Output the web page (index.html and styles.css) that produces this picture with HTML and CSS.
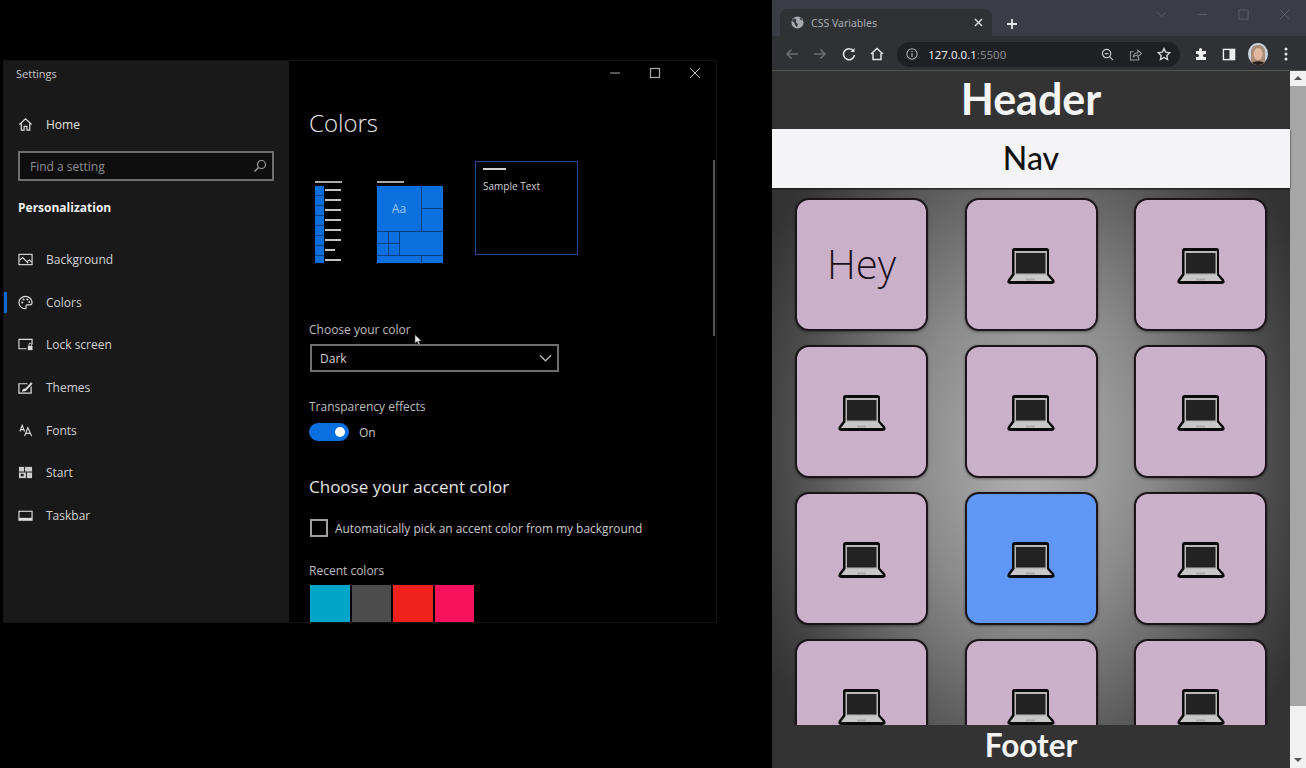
FILE: index.html
```html
<!DOCTYPE html>
<html lang="en">
<head>
  <meta charset="UTF-8" />
  <title>Settings and CSS Variables</title>
  <link rel="stylesheet" href="styles.css">
</head>
<body>
  <svg class="defs" width="0" height="0">
    <symbol id="laptop" viewBox="0 0 48 36">
      <path d="M5 2.500Q5 0 7.500 0H39.500Q42 0 42 2.500V26L47 31.500Q49 36 44.500 36H3.500Q-1 36 1 31.500L5 26Z" fill="#0a0a0a"/>
      <rect x="7.500" y="3" width="32.500" height="24" fill="#b8b8b8"/>
      <rect x="9" y="5" width="29.500" height="20.500" fill="#222"/>
      <path d="M7.500 27H40L45 33H3Z" fill="#c8c8c8"/>
      <rect x="19" y="30.500" width="9" height="2" fill="#aaa"/>
    </symbol>
  </svg>

  <!-- settings window -->
  <section class="settings">
    <aside class="side">
      <div class="side-title">Settings</div>
      <div class="nav-item home">
        <svg viewBox="0 0 16 16" class="ic"><path d="M1.500 8L8 2l6.500 6M3.500 6.500V14H6.500V10H9.500V14H12.500V6.500" fill="none" stroke="#ddd" stroke-width="1.300"/></svg>
        <span>Home</span>
      </div>
      <div class="search">
        <span>Find a setting</span>
        <svg viewBox="0 0 14 14" width="14" height="14"><circle cx="8.500" cy="5.500" r="4" fill="none" stroke="#999" stroke-width="1.200"/><path d="M5.500 8.500L1.500 12.500" stroke="#999" stroke-width="1.400"/></svg>
      </div>
      <div class="side-head">Personalization</div>
      <ul class="nav-list">
        <li class="nav-item">
          <svg viewBox="0 0 16 14" class="ic"><rect x="1" y="1.500" width="14" height="11" fill="none" stroke="#ddd" stroke-width="1.200"/><path d="M1.500 8L5 5l6 6M10 9l2-1.500 3 2.500" fill="none" stroke="#ddd" stroke-width="1.200"/></svg>
          <span>Background</span>
        </li>
        <li class="nav-item active">
          <svg viewBox="0 0 16 16" class="ic"><path d="M8 1.500C4 1.500 1 4.500 1 8s3 6.500 6.500 6.500c1.500 0 1.500-1 1-2-.5-1.200.3-2 1.500-2h2.500c1.500 0 2.500-1 2.500-2.500 0-3.500-3-6.500-7-6.500Z" fill="none" stroke="#ddd" stroke-width="1.200"/><circle cx="4.500" cy="8" r="1.100" fill="#ddd"/><circle cx="6" cy="4.800" r="1.100" fill="#ddd"/><circle cx="10" cy="4.800" r="1.100" fill="#ddd"/><circle cx="12" cy="7.500" r="1" fill="#ddd"/></svg>
          <span>Colors</span>
        </li>
        <li class="nav-item">
          <svg viewBox="0 0 16 14" class="ic"><path d="M9 11.500H1V1.500H15V7" fill="none" stroke="#ddd" stroke-width="1.200"/><rect x="10.500" y="8.500" width="5" height="4.500" fill="#ddd"/><path d="M11.700 8.500V7a1.300 1.300 0 0 1 2.600 0V8.500" fill="none" stroke="#ddd"/></svg>
          <span>Lock screen</span>
        </li>
        <li class="nav-item">
          <svg viewBox="0 0 16 14" class="ic"><path d="M10 3H1V13H14V6" fill="none" stroke="#ddd" stroke-width="1.300"/><path d="M4 11C5 8 7 8 8 8L14 1.500 15.500 3 9.500 9.500C9 11 6 11.500 4 11Z" fill="#ddd"/></svg>
          <span>Themes</span>
        </li>
        <li class="nav-item">
          <svg viewBox="0 0 16 14" class="ic"><path d="M2 8L4.500 1.500 7 8M3 6H6M7 13L10.500 4 14.500 13M8.500 10H13" fill="none" stroke="#ddd" stroke-width="1.200"/></svg>
          <span>Fonts</span>
        </li>
        <li class="nav-item">
          <svg viewBox="0 0 16 14" class="ic"><rect x="1" y="1" width="14" height="12" fill="#ccc"/><path d="M1 6.500H15M7 1V6.500M9 6.500V13" stroke="#191919" stroke-width="1"/><rect x="3" y="8.500" width="3" height="2.500" fill="#191919"/></svg>
          <span>Start</span>
        </li>
        <li class="nav-item">
          <svg viewBox="0 0 16 14" class="ic"><rect x="1" y="2.500" width="14" height="9.500" fill="none" stroke="#ddd" stroke-width="1.200"/><rect x="1" y="9.500" width="14" height="2.500" fill="#ddd"/></svg>
          <span>Taskbar</span>
        </li>
      </ul>
    </aside>

    <div class="pane">
      <div class="win-btns">
        <svg viewBox="0 0 12 12" width="12" height="12"><path d="M1 6H11" stroke="#aaa" stroke-width="1"/></svg>
        <svg viewBox="0 0 12 12" width="12" height="12"><rect x="1.500" y="1.500" width="9" height="9" fill="none" stroke="#aaa" stroke-width="1.200"/></svg>
        <svg viewBox="0 0 12 12" width="12" height="12"><path d="M1 1L11 11M11 1L1 11" stroke="#bbb" stroke-width="1"/></svg>
      </div>
      <h1 class="pane-title">Colors</h1>

      <div class="previews">
        <div class="prev-list">
          <div class="prev-bar"></div>
          <div class="list-body">
            <div class="list-col"></div>
            <div class="list-lines">
              <i></i><i></i><i></i><i></i><i></i><i></i><i class="short"></i><i></i>
            </div>
          </div>
        </div>
        <div class="prev-tiles">
          <div class="prev-bar"></div>
          <div class="tiles">
            <div class="t-aa">Aa</div>
            <div class="t-r"></div>
            <div class="t-r"></div>
            <div></div><div></div>
            <div class="t-big"></div>
            <div></div><div></div>
            <div class="t-bot"></div>
            <div></div>
          </div>
        </div>
        <div class="prev-text">
          <div class="prev-line"></div>
          <div>Sample Text</div>
        </div>
      </div>

      <div class="label color-label">Choose your color</div>
      <div class="select">
        <span>Dark</span>
        <svg viewBox="0 0 14 8" width="13" height="8"><path d="M1 1L7 7 13 1" fill="none" stroke="#bbb" stroke-width="1.300"/></svg>
      </div>

      <div class="label trans-label">Transparency effects</div>
      <div class="toggle-row">
        <div class="toggle"><div class="knob"></div></div>
        <span>On</span>
      </div>

      <h2 class="accent">Choose your accent color</h2>
      <div class="check-row">
        <div class="check"></div>
        <span>Automatically pick an accent color from my background</span>
      </div>
      <div class="label recent-label">Recent colors</div>
      <div class="swatches">
        <div class="sw sw-cyan"></div>
        <div class="sw sw-grey"></div>
        <div class="sw sw-red"></div>
        <div class="sw sw-pink"></div>
      </div>

      <div class="pane-scroll"></div>
      <svg class="cursor" viewBox="0 0 10 14" width="9" height="14"><path d="M1 1V11L3.500 8.800 5.500 13 7 12.300 5.200 8.200H8.500Z" fill="#eee" stroke="#111" stroke-width=".6"/></svg>
    </div>
  </section>

  <!-- browser window -->
  <section class="browser">
    <div class="tabstrip">
      <div class="tab">
        <svg viewBox="0 0 14 14" width="13" height="13"><circle cx="7" cy="7" r="6.500" fill="#a9abb0"/><path d="M3 2.500L6 4 5 6.500 7.500 8.500 6.500 12 4.500 10 3.500 7 1 5.500ZM9 1.500L10 4 12.500 5 11.500 3Z" fill="#34363b"/></svg>
        <span class="tab-name">CSS Variables</span>
        <svg viewBox="0 0 10 10" width="9" height="9" class="tab-x"><path d="M1 1L9 9M9 1L1 9" stroke="#ddd" stroke-width="1.600"/></svg>
      </div>
      <svg viewBox="0 0 12 12" width="12" height="12" class="newtab"><path d="M6 1V11M1 6H11" stroke="#e4e4e4" stroke-width="1.800"/></svg>
      <div class="frame-btns">
        <svg viewBox="0 0 12 8" width="11" height="7"><path d="M1 1L6 6.500 11 1" fill="none" stroke="#5d6068" stroke-width="1.100"/></svg>
        <svg viewBox="0 0 12 12" width="11" height="11"><path d="M1 6H11" stroke="#5d6068" stroke-width="1"/></svg>
        <svg viewBox="0 0 12 12" width="11" height="11"><rect x="1" y="1" width="10" height="10" fill="none" stroke="#5d6068" stroke-width="1"/></svg>
        <svg viewBox="0 0 12 12" width="11" height="11"><path d="M1 1L11 11M11 1L1 11" stroke="#5d6068" stroke-width="1"/></svg>
      </div>
    </div>
    <div class="toolbar">
      <svg viewBox="0 0 14 12" width="14" height="12"><path d="M13 6H2M6.500 1.500L2 6l4.500 4.500" fill="none" stroke="#6c6e73" stroke-width="1.500"/></svg>
      <svg viewBox="0 0 14 12" width="14" height="12"><path d="M1 6H12M7.500 1.500L12 6l-4.500 4.500" fill="none" stroke="#6c6e73" stroke-width="1.500"/></svg>
      <svg viewBox="0 0 14 14" width="14" height="14"><path d="M11.500 4A5.500 5.500 0 1 0 12.500 8" fill="none" stroke="#e2e2e2" stroke-width="1.600"/><path d="M12.500 1V5H8.500Z" fill="#e2e2e2"/></svg>
      <svg viewBox="0 0 14 14" width="14" height="14"><path d="M1 7L7 1.500 13 7M3 6V12.500H11V6" fill="none" stroke="#e2e2e2" stroke-width="1.500"/></svg>
      <div class="urlbar">
        <svg viewBox="0 0 14 14" width="12" height="12"><circle cx="7" cy="7" r="6" fill="none" stroke="#b5b5b5" stroke-width="1.200"/><path d="M7 6V10.500M7 3.500V5" stroke="#b5b5b5" stroke-width="1.300"/></svg>
        <span class="url"><b>127.0.0.1</b>:5500</span>
        <div class="url-icons">
          <svg viewBox="0 0 14 14" width="13" height="13"><circle cx="6" cy="6" r="4.500" fill="none" stroke="#c8c8c8" stroke-width="1.300"/><path d="M9.500 9.500L13 13M4 6H8" stroke="#c8c8c8" stroke-width="1.300"/></svg>
          <svg viewBox="0 0 14 14" width="13" height="13"><path d="M5 4H1.500V13H10.500V10" fill="none" stroke="#999" stroke-width="1.100"/><path d="M4.500 10C5 6.500 7 5 9.500 5V2.500L13.500 6 9.500 9.500V7.500C7.500 7.500 6 8 4.500 10Z" fill="none" stroke="#999" stroke-width="1.100"/></svg>
          <svg viewBox="0 0 14 14" width="14" height="14"><path d="M7 1.500L8.700 5.200 12.800 5.700 9.800 8.400 10.600 12.500 7 10.500 3.400 12.500 4.200 8.400 1.200 5.700 5.300 5.200Z" fill="none" stroke="#ddd" stroke-width="1.300"/></svg>
        </div>
      </div>
      <div class="tool-right">
        <svg viewBox="0 0 14 14" width="14" height="14"><path d="M5 2.500a1.500 1.500 0 0 1 3 0V4h4v3H10.500a1.500 1.500 0 0 0 0 3H12v3H2V10H3.500a1.500 1.500 0 0 0 0-3H2V4H5Z" fill="#eee"/></svg>
        <svg viewBox="0 0 14 14" width="14" height="13"><rect x="1" y="1.500" width="12" height="11" fill="none" stroke="#eee" stroke-width="1.500"/><rect x="7.500" y="1.500" width="5.500" height="11" fill="#eee"/></svg>
        <svg viewBox="0 0 20 22" width="20" height="22" class="avatar"><defs><clipPath id="av"><ellipse cx="10" cy="11" rx="10" ry="11"/></clipPath></defs><g clip-path="url(#av)"><rect width="20" height="22" fill="#c8d4e0"/><path d="M3 22V9C3 3 7 2 10 2s7 1 7 7V22Z" fill="#a98c78"/><ellipse cx="10" cy="11" rx="4.500" ry="6" fill="#e2b8a0"/><path d="M2 22C4 17 16 17 18 22Z" fill="#2b1f1c"/></g></svg>
        <svg viewBox="0 0 4 14" width="4" height="14" class="dots"><circle cx="2" cy="2" r="1.500" fill="#e8e8e8"/><circle cx="2" cy="7" r="1.500" fill="#e8e8e8"/><circle cx="2" cy="12" r="1.500" fill="#e8e8e8"/></svg>
      </div>
    </div>

    <div class="viewport">
      <div class="page">
        <header class="page-head">Header</header>
        <nav class="page-nav">Nav</nav>
        <main class="page-main">
          <div class="card hey">Hey</div>
          <div class="card"><svg class="laptop"><use href="#laptop"/></svg></div>
          <div class="card"><svg class="laptop"><use href="#laptop"/></svg></div>
          <div class="card"><svg class="laptop"><use href="#laptop"/></svg></div>
          <div class="card"><svg class="laptop"><use href="#laptop"/></svg></div>
          <div class="card"><svg class="laptop"><use href="#laptop"/></svg></div>
          <div class="card"><svg class="laptop"><use href="#laptop"/></svg></div>
          <div class="card blue"><svg class="laptop"><use href="#laptop"/></svg></div>
          <div class="card"><svg class="laptop"><use href="#laptop"/></svg></div>
          <div class="card"><svg class="laptop"><use href="#laptop"/></svg></div>
          <div class="card"><svg class="laptop"><use href="#laptop"/></svg></div>
          <div class="card"><svg class="laptop"><use href="#laptop"/></svg></div>
        </main>
        <footer class="page-foot">Footer</footer>
      </div>
      <div class="scrollbar">
        <div class="arrow arrow-up"></div>
        <div class="thumb"></div>
        <div class="arrow arrow-down"></div>
      </div>
    </div>
  </section>
</body>
</html>
```

FILE: styles.css
```css
* {
  box-sizing: border-box;
}
html, body {
  margin: 0;
  height: 100%;
  overflow: hidden;
}
body {
  position: relative;
  background-color: #000;
  font-family: "Open Sans", "Noto Sans", sans-serif;
  color: #ddd;
}
.defs {
  position: absolute;
}

/* settings window */
.settings {
  position: absolute;
  left: 3px;
  top: 60px;
  width: 714px;
  height: 563px;
  display: flex;
  border: 1px solid #141414;
  overflow: hidden;
}
.side {
  width: 285px;
  flex-shrink: 0;
  background-color: #191919;
  padding: 6px 14px 0;
}
.side-title {
  font-size: 11px;
  line-height: 14px;
  color: #c8c8c8;
  margin: 0 0 32px -2px;
}
.nav-item {
  display: flex;
  align-items: center;
  gap: 13px;
  height: 42.700px;
  font-size: 12px;
  color: #d2d2d2;
  position: relative;
}
.nav-item.home {
  height: 22px;
  margin-bottom: 16px;
  color: #e4e4e4;
}
.ic {
  width: 15px;
  height: 15px;
  flex-shrink: 0;
}
.nav-item.active::before {
  content: "";
  position: absolute;
  left: -14px;
  top: 11px;
  width: 3px;
  height: 21px;
  background-color: #0a6cd6;
}
.search {
  height: 30px;
  width: 256px;
  border: 2px solid #6f6f6f;
  background-color: #0e0e0e;
  display: flex;
  align-items: center;
  justify-content: space-between;
  padding: 0 5px 0 10px;
  font-size: 12px;
  color: #8c8c8c;
}
.side-head {
  margin-top: 19px;
  font-size: 12px;
  font-weight: 700;
  color: #f0f0f0;
  line-height: 16px;
}
.nav-list {
  list-style: none;
  margin: 22px 0 0;
  padding: 0;
}

/* right pane */
.pane {
  flex: 1;
  position: relative;
  background-color: #000;
  padding: 0 20px;
}
.win-btns {
  position: absolute;
  right: 15px;
  top: 6px;
  display: flex;
  gap: 28px;
}
.pane-title {
  margin: 45px 0 0;
  font-size: 24px;
  font-weight: 300;
  line-height: 34px;
  color: #e8e8e8;
}
.previews {
  display: flex;
  align-items: flex-start;
  margin: 21px 0 0 6px;
  height: 131px;
}
.prev-list {
  width: 26px;
  margin-top: 20px;
}
.prev-bar {
  height: 2px;
  width: 27px;
  background-color: #aaa;
}
.list-body {
  display: flex;
  gap: 1px;
  margin-top: 3px;
}
.list-col {
  width: 9px;
  height: 77px;
  background: repeating-linear-gradient(#0a6fdc 0 9px, #063f80 9px 10px);
}
.list-lines {
  display: flex;
  flex-direction: column;
  gap: 8px;
  padding-top: 3px;
}
.list-lines i {
  display: block;
  width: 16px;
  height: 2px;
  background-color: #c4c4c4;
}
.list-lines i.short {
  width: 10px;
}
.prev-tiles {
  margin: 20px 0 0 36px;
}
.tiles {
  margin-top: 3px;
  width: 66px;
  display: grid;
  grid-template-columns: 11px 10px 21px 21px;
  grid-template-rows: 22px 22px 11px 11px 7px;
  gap: 1px;
  background-color: #063f80;
}
.tiles div {
  background-color: #0a70de;
}
.tiles .t-aa {
  grid-column: 1 / 4;
  grid-row: 1 / 3;
  display: flex;
  align-items: center;
  justify-content: center;
  font-size: 12px;
  color: #9ec7f2;
}
.tiles .t-r {
  grid-column: 4;
}
.tiles .t-big {
  grid-column: 3 / 5;
  grid-row: 3 / 5;
}
.tiles .t-bot {
  grid-column: 1 / 4;
}
.prev-text {
  width: 103px;
  height: 94px;
  margin-left: 32px;
  border: 1px solid #234a90;
  padding: 6px 7px;
  font-size: 10px;
  line-height: 14px;
  color: #cfcfcf;
}
.prev-line {
  width: 23px;
  height: 2px;
  background-color: #d0d0d0;
  margin-bottom: 9px;
}
.label {
  font-size: 12px;
  line-height: 16px;
  color: #bdbdbd;
}
.color-label {
  margin-top: 30px;
}
.select {
  width: 249px;
  height: 28px;
  margin: 6px 0 0 1px;
  border: 2px solid #6f6f6f;
  display: flex;
  align-items: center;
  justify-content: space-between;
  padding: 0 5px 0 8px;
  font-size: 12px;
  color: #d0d0d0;
}
.trans-label {
  margin-top: 27px;
}
.toggle-row {
  display: flex;
  align-items: center;
  gap: 10px;
  margin-top: 8px;
  font-size: 12px;
  color: #c8c8c8;
}
.toggle {
  width: 40px;
  height: 18px;
  border-radius: 9px;
  background-color: #0a6fe0;
  position: relative;
}
.knob {
  position: absolute;
  right: 4px;
  top: 4px;
  width: 10px;
  height: 10px;
  border-radius: 50%;
  background-color: #fff;
}
.accent {
  margin: 34px 0 0;
  font-size: 17px;
  font-weight: 400;
  line-height: 24px;
  color: #e4e4e4;
}
.check-row {
  display: flex;
  align-items: center;
  gap: 7px;
  margin: 20px 0 0 1px;
  font-size: 11.900px;
  color: #c8c8c8;
}
.check {
  width: 18px;
  height: 18px;
  border: 2px solid #a0a0a0;
}
.recent-label {
  margin-top: 26px;
}
.swatches {
  display: flex;
  gap: 2px;
  margin: 6px 0 0 1px;
}
.sw {
  width: 39.500px;
  height: 37px;
}
.sw-cyan { background-color: #00a6c8; }
.sw-grey { background-color: #4c4c4c; }
.sw-red { background-color: #f0201c; }
.sw-pink { background-color: #f8125e; }
.pane-scroll {
  position: absolute;
  right: 1px;
  top: 99px;
  width: 2px;
  height: 176px;
  background-color: #555;
}
.cursor {
  position: absolute;
  left: 125px;
  top: 272px;
}

/* browser window */
.browser {
  position: absolute;
  left: 772px;
  top: 0;
  width: 534px;
  height: 768px;
  display: flex;
  flex-direction: column;
  font-family: "Noto Sans", "Open Sans", sans-serif;
}
.tabstrip {
  height: 36px;
  flex-shrink: 0;
  background-color: #3a3d46;
  display: flex;
  align-items: flex-end;
  padding-left: 8px;
  position: relative;
}
.tab {
  width: 212px;
  height: 27px;
  background-color: #2f3135;
  border-radius: 8px 8px 0 0;
  display: flex;
  align-items: center;
  padding: 0 9px 0 11px;
  gap: 7px;
}
.tab-name {
  flex: 1;
  font-size: 10.500px;
  color: #a9abb0;
}
.newtab {
  margin: 0 0 6px 14px;
}
.frame-btns {
  position: absolute;
  right: 16px;
  top: 9px;
  display: flex;
  align-items: center;
  gap: 30px;
}
.toolbar {
  height: 35px;
  flex-shrink: 0;
  background-color: #2f3135;
  border-bottom: 1px solid #55574f;
  display: flex;
  align-items: center;
  padding: 2px 18px 0 13px;
  gap: 14.300px;
}
.urlbar {
  width: 283px;
  height: 25px;
  margin-left: -1px;
  border-radius: 13px;
  background-color: #1f2023;
  display: flex;
  align-items: center;
  padding: 0 9px;
  gap: 10px;
}
.url {
  flex: 1;
  font-size: 11.500px;
  color: #85878b;
}
.url b {
  font-weight: 400;
  color: #e8e8e8;
}
.url-icons {
  display: flex;
  align-items: center;
  gap: 15px;
}
.tool-right {
  flex: 1;
  display: flex;
  align-items: center;
  gap: 14px;
}
.avatar {
  margin-left: -2px;
}
.dots {
  margin-left: 2px;
}
.viewport {
  flex: 1;
  display: flex;
  min-height: 0;
}
.page {
  width: 518px;
  display: flex;
  flex-direction: column;
  font-family: Lato, "Noto Sans", sans-serif;
}
.page-head {
  height: 58px;
  flex-shrink: 0;
  background-color: #333;
  color: #f4f4f4;
  font-size: 43px;
  font-weight: 700;
  line-height: 56px;
  text-align: center;
}
.page-nav {
  height: 59px;
  flex-shrink: 0;
  background-color: #f4f4f6;
  color: #111;
  font-size: 32px;
  font-weight: 500;
  line-height: 58px;
  text-align: center;
  box-shadow: 0 1px 2px #111;
  position: relative;
}
.page-main {
  flex: 1;
  min-height: 0;
  overflow: hidden;
  background: radial-gradient(ellipse 300px 420px at 50% 49%, #b4b4b4 0%, #8a8a8a 40%, #4c4c4c 80%, #333 100%);
  display: grid;
  grid-template-columns: repeat(3, 133px);
  grid-auto-rows: 133px;
  justify-content: space-between;
  column-gap: 36px;
  row-gap: 14px;
  padding: 10px 23px 0;
}
.card {
  background-color: #cbb0c9;
  border: 2px solid #1b1419;
  border-radius: 14px;
  box-shadow: 0 1px 3px rgba(0, 0, 0, 0.4);
  display: flex;
  align-items: center;
  justify-content: center;
}
.card.blue {
  background-color: #6096f5;
}
.card.hey {
  font-family: "Open Sans", sans-serif;
  font-size: 40px;
  font-weight: 300;
  color: #1c1020;
  padding-bottom: 3px;
}
.laptop {
  width: 48px;
  height: 36px;
  margin-top: 3px;
}
.page-foot {
  height: 43px;
  flex-shrink: 0;
  background-color: #333;
  color: #f4f4f4;
  font-size: 31.500px;
  font-weight: 700;
  line-height: 40px;
  text-align: center;
}
.scrollbar {
  width: 16px;
  background-color: #f1f1f1;
  display: flex;
  flex-direction: column;
  align-items: center;
}
.thumb {
  width: 100%;
  height: 620px;
  background-color: #a6a6a6;
}
.arrow {
  height: 15px;
  width: 100%;
  position: relative;
}
.arrow::after {
  content: "";
  position: absolute;
  left: 4px;
  top: 5px;
  border-left: 4px solid transparent;
  border-right: 4px solid transparent;
}
.arrow-up::after {
  border-bottom: 4px solid #555;
}
.arrow-down {
  margin-top: auto;
}
.arrow-down::after {
  border-top: 4px solid #555;
}
```
